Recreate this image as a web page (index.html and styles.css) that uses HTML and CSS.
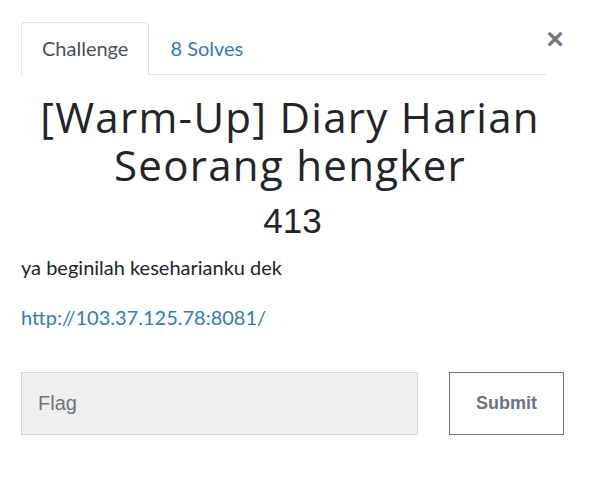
FILE: index.html
```html
<!DOCTYPE html>
<html>
<head>
<meta charset="utf-8">
<link rel="stylesheet" href="styles.css">
</head>
<body>
<div class="modal">
  <div class="head">
    <ul class="tabs">
      <li class="tab active">Challenge</li>
      <li class="tab">8 Solves</li>
    </ul>
    <button class="close">&times;</button>
  </div>
  <h2 class="title">[Warm-Up] Diary Harian Seorang hengker</h2>
  <h3 class="value">413</h3>
  <p class="desc">ya beginilah keseharianku dek</p>
  <p class="link"><a href="#">http://103.37.125.78:8081/</a></p>
  <div class="form">
    <input class="flag" placeholder="Flag">
    <button class="submit">Submit</button>
  </div>
</div>
</body>
</html>
```
FILE: styles.css
```css
html, body { margin: 0; padding: 0; background: #fff; }
.modal { padding: 22px 32px 0 21px; font-family: Lato, sans-serif; color: #212529; }
.head { display: flex; align-items: flex-start; }
.tabs { list-style: none; margin: 0; padding: 0; display: flex; border-bottom: 1px solid #dee2e6; width: 525px; }
.tab { font-size: 20px; color: #337ab7; padding: 11px 20px 12px 20px; margin-bottom: -1px; border: 1px solid transparent; border-radius: 4px 4px 0 0; line-height: 28px; }
.tab.active { color: #495057; border-color: #dee2e6 #dee2e6 #fff; background: #fff; }
.close { border: 0; background: none; padding: 0; margin: 7px 0 0 0; font-family: "Liberation Sans", sans-serif; font-size: 30px; font-weight: bold; color: #777; line-height: 20px; width: 18px; }
.title { font-family: "Open Sans", sans-serif; font-weight: 400; font-size: 42px; line-height: 48px; text-align: center; margin: 18px 0 0 0; padding: 0 5px 0 0; letter-spacing: 1.3px; }
.value { font-family: "Liberation Sans", sans-serif; font-weight: 400; font-size: 35px; text-align: center; margin: 12px 0 0 0; line-height: 40px; }
.desc { font-size: 20px; margin: 12px 0 0 0; line-height: 28px; }
.link { font-size: 20px; margin: 22px 0 0 0; line-height: 28px; }
.link a { color: #337ab7; text-decoration: none; }
.form { display: flex; margin-top: 41px; gap: 31px; }
.flag { width: 397px; height: 63px; box-sizing: border-box; background: #efefef; border: 1px solid #d6d6d6; font-family: "Liberation Sans", sans-serif; font-size: 20px; padding: 0 16px; color: #666; margin: 0; }
.flag::placeholder { color: #6c757d; }
.submit { width: 115px; height: 63px; box-sizing: border-box; background: #fff; border: 1px solid #6c757d; font-family: "Liberation Sans", sans-serif; font-weight: bold; font-size: 18px; color: #6c757d; margin: 0; }
```
